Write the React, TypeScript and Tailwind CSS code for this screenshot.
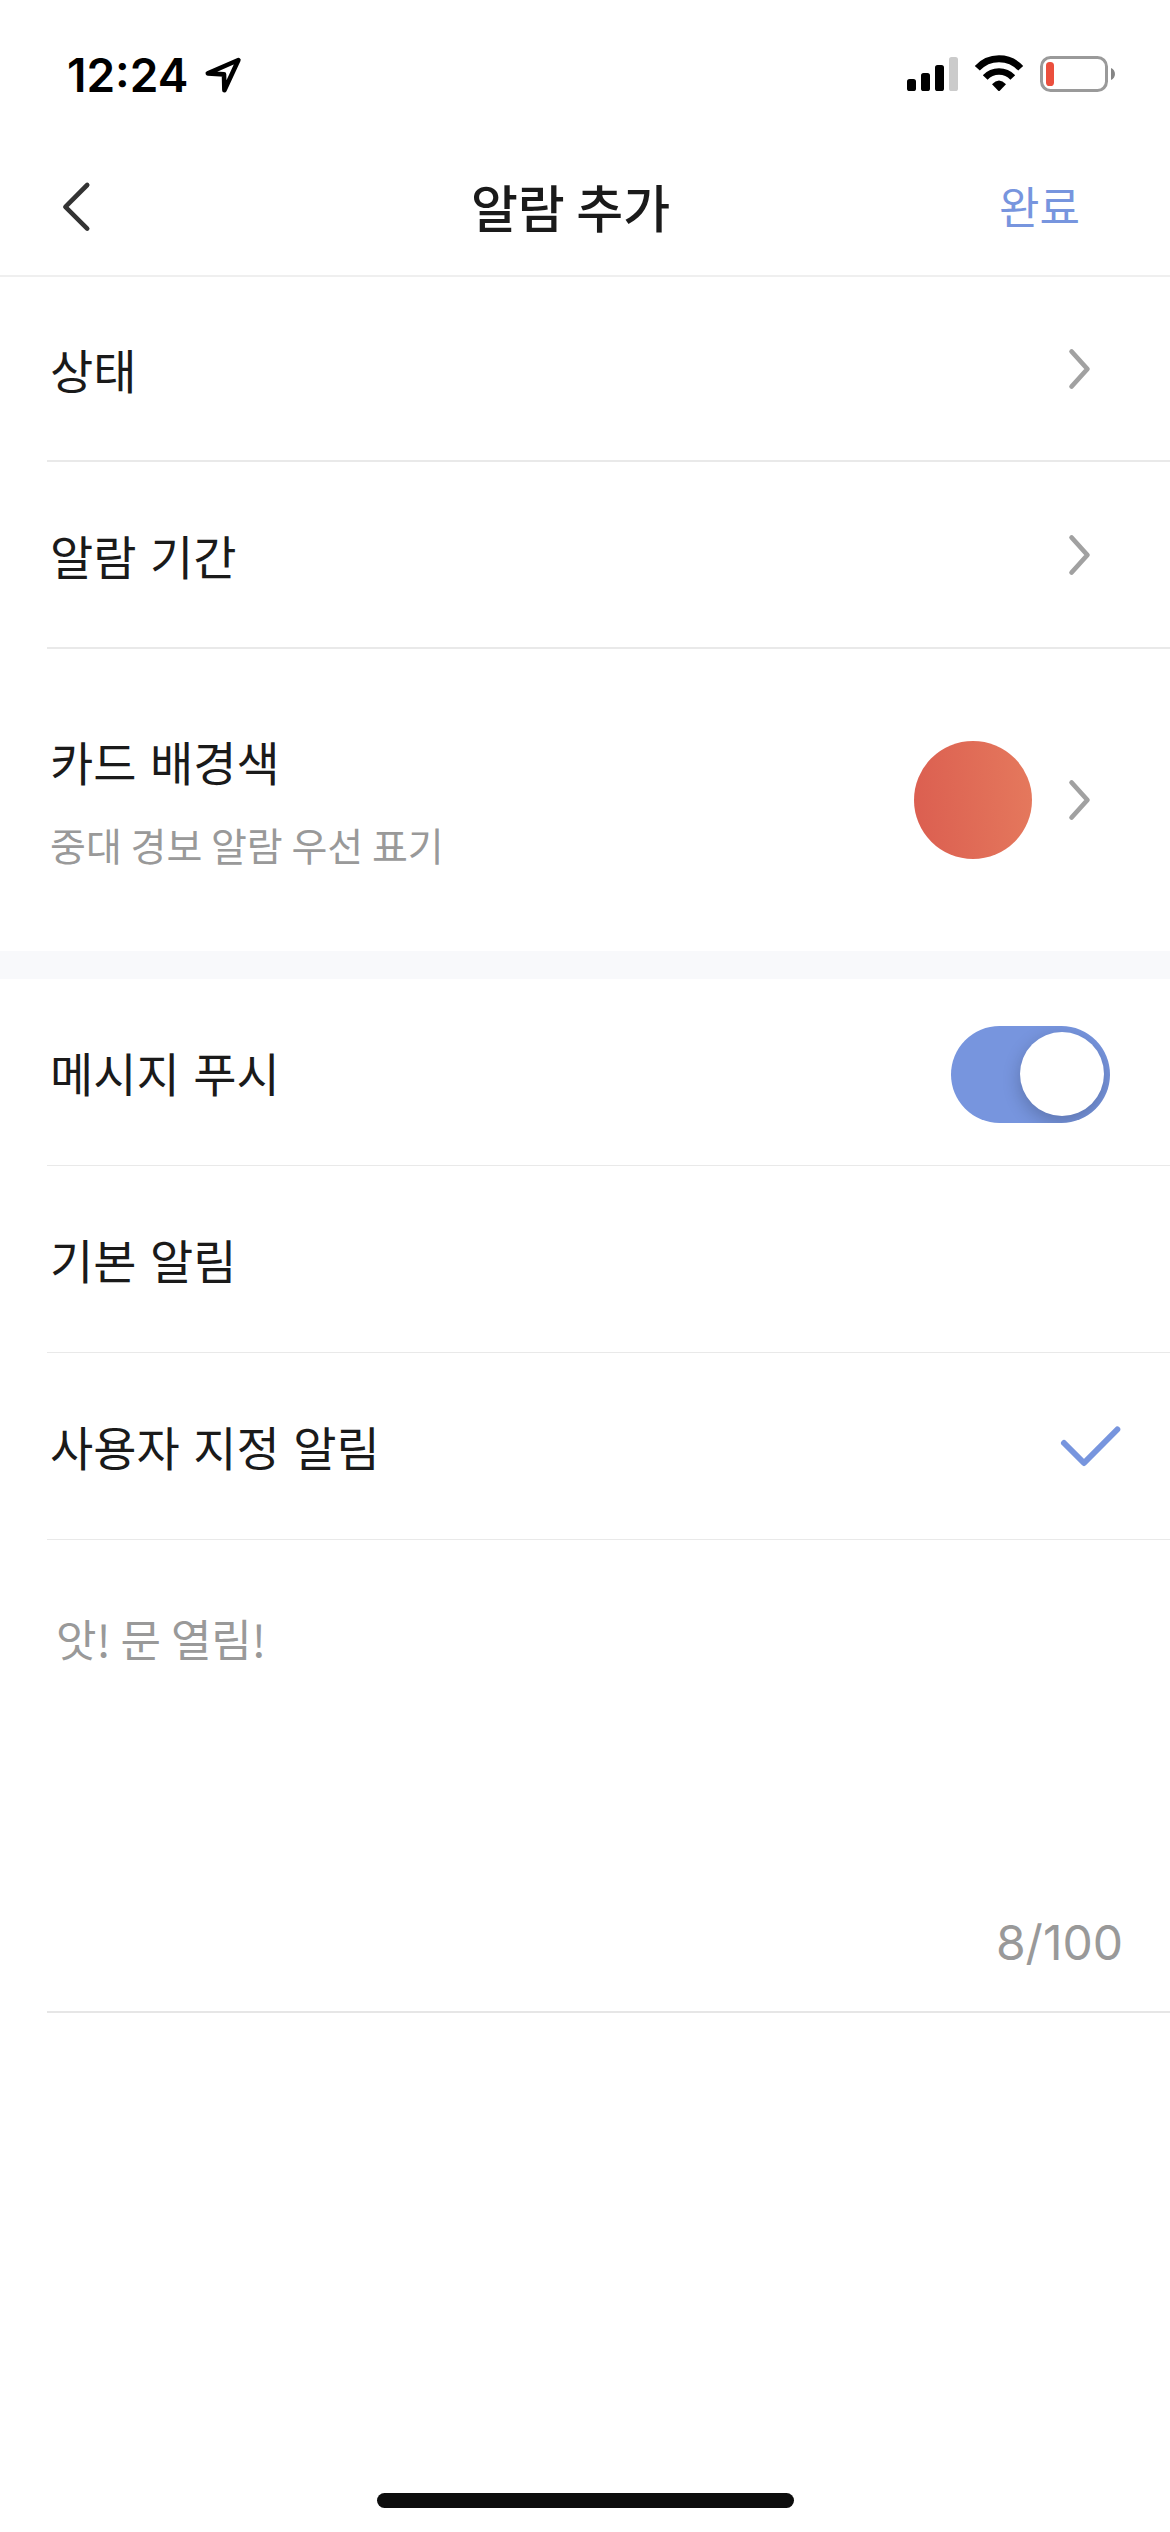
import React, { useState } from "react";

const KR = "font-['Noto_Sans_CJK_KR',sans-serif]";

function StatusBar() {
  return (
    <div className="flex h-[150px] items-start justify-between pl-[67px] pr-[55px] font-['Inter',sans-serif]">
      <div className="flex pt-[55px]">
        <span className="w-[136px] text-[46px] font-semibold leading-[40px] text-black">12:24</span>
        <svg className="h-[40px] w-[40px]" viewBox="201 55 40 40" fill="none" stroke="#000" strokeWidth="4.6" strokeLinejoin="round">
          <path d="M236.4 60 L205.8 73.4 L222 74.4 L222.4 90.2 Z" />
        </svg>
      </div>
      <div className="flex pt-[54px]">
        <svg className="h-[40px] w-[210px]" viewBox="905 54 210 40" fill="none">
          <rect x="907" y="79" width="9" height="12" rx="2.6" fill="#000" />
          <rect x="921" y="73" width="9" height="18" rx="2.6" fill="#000" />
          <rect x="935" y="65" width="9" height="26" rx="2.6" fill="#000" />
          <rect x="949" y="57" width="9" height="34" rx="2.6" fill="#cbcbcb" />
          <path d="M977.3 68.3 A29.4 29.4 0 0 1 1020.7 68.3" stroke="#000" strokeWidth="6.8" />
          <path d="M985.2 77.4 A19 19 0 0 1 1012.8 77.4" stroke="#000" strokeWidth="6.6" />
          <path d="M992 84.2 Q999 76.8 1006 84.2 L1000 90.4 Q999 91.4 998 90.4 Z" fill="#000" />
          <rect x="1041.5" y="57.5" width="65" height="33" rx="9" stroke="#9a9a9a" strokeWidth="3" />
          <rect x="1046" y="62" width="8" height="24" rx="3.6" fill="#eb4f3d" />
          <path d="M1111 68 C1116.3 70 1116.3 78 1111 80 Z" fill="#858585" />
        </svg>
      </div>
    </div>
  );
}

function NavBar() {
  return (
    <header className="flex h-[127px] items-start border-b-2 border-[#efefef] pl-[60px] pr-[90px]">
      <button className="mt-[30px] h-[54px] w-[60px]" aria-label="뒤로">
        <svg className="h-[54px] w-[34px]" viewBox="60 180 34 54" fill="none" stroke="#333" strokeWidth="4.6" strokeLinecap="round" strokeLinejoin="round">
          <path d="M87.2 185 L65.4 206.8 L87.2 228.6" />
        </svg>
      </button>
      <h1 className="ml-[351px] mt-[26px] w-[529px] whitespace-nowrap text-[51px] font-medium leading-[60px] text-[#1a1a1a]">알람 추가</h1>
      <button className="mt-[25px] whitespace-nowrap text-[44px] leading-[60px] text-[#7795de]">완료</button>
    </header>
  );
}

function Chevron() {
  return (
    <svg className="h-[44px] w-[24px] shrink-0" viewBox="1068 345 24 44" fill="none" stroke="#a1a1a1" strokeWidth="4.8" strokeLinecap="round" strokeLinejoin="round">
      <path d="M1071.6 349.5 L1087.4 367 L1071.6 384.5" />
    </svg>
  );
}

function Row({ label, line, children }: { label: string; line: string; children?: React.ReactNode }) {
  return (
    <div className={"ml-[47px] flex items-center justify-between border-[#e9e9e9] pl-[3px] " + line}>
      <span className="whitespace-nowrap text-[47px] leading-[60px] [word-spacing:3px]">{label}</span>
      {children}
    </div>
  );
}

export default function App() {
  const [push, setPush] = useState(true);
  return (
    <div className={"flex h-[2532px] w-[1170px] flex-col overflow-hidden bg-white text-[#1a1a1a] " + "font-['Noto_Sans_CJK_KR',sans-serif]"}>
      <StatusBar />
      <NavBar />
      <Row label="상태" line="h-[185px] border-b-2 pr-[78px]"><Chevron /></Row>
      <Row label="알람 기간" line="h-[187px] border-b-2 pr-[78px]"><Chevron /></Row>
      <div className="flex h-[302px] items-center justify-between pl-[50px] pr-[78px]">
        <div className="flex flex-col">
          <span className="text-[47px] leading-[60px] [word-spacing:3px]">카드 배경색</span>
          <span className="mt-[28px] text-[39px] leading-[50px] text-[#999]">중대 경보 알람 우선 표기</span>
        </div>
        <div className="flex items-center gap-[36px]">
          <div className="size-[118px] rounded-full bg-[linear-gradient(85deg,#db5e50,#e5795d)]" />
          <Chevron />
        </div>
      </div>
      <div className="h-[28px] bg-[#f8f9fb]" />
      <Row label="메시지 푸시" line="h-[187px] border-b pr-[60px]">
        <button
          role="switch"
          aria-checked={push}
          aria-label="메시지 푸시"
          onClick={() => setPush(!push)}
          className={"mt-[4px] flex h-[97px] w-[159px] items-center overflow-hidden rounded-full px-[6px] " + (push ? "justify-end bg-[#7795de]" : "justify-start bg-[#ddd]")}
        >
          <span className="size-[84px] rounded-full bg-white shadow-[0_6px_18px_rgba(0,0,0,0.22)]" />
        </button>
      </Row>
      <Row label="기본 알림" line="h-[187px] border-b pr-[47px]" />
      <Row label="사용자 지정 알림" line="h-[187px] border-b pr-[47px]">
        <svg className="h-[44px] w-[64px]" viewBox="1060 1424 64 44" fill="none" stroke="#7795de" strokeWidth="6" strokeLinecap="round" strokeLinejoin="round">
          <path d="M1065 1443 L1085 1463 L1118.3 1429.5" />
        </svg>
      </Row>
      <div className="ml-[47px] flex h-[473px] flex-col justify-between border-b-2 border-[#e6e6e6] pb-[38px] pl-[9px] pr-[47px] pt-[68px] text-[#999]">
        <span className="text-[44px] leading-[60px]">앗! 문 열림!</span>
        <span className="self-end font-['Inter',sans-serif] text-[48px] leading-[60px]">8/100</span>
      </div>
      <div className="mt-auto flex h-[39px] justify-center">
        <div className="h-[15px] w-[417px] rounded-full bg-[#0d0d0d]" />
      </div>
    </div>
  );
}
